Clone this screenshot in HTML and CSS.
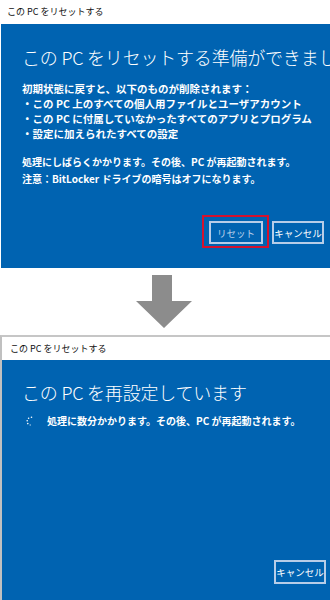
FILE: index.html
```html
<!DOCTYPE html>
<html lang="ja">
<head>
<meta charset="utf-8">
<title>この PC をリセットする</title>
<link rel="stylesheet" href="styles.css">
</head>
<body>
<div class="win win-first">
  <div class="titlebar">この PC をリセットする</div>
  <div class="panel panel-first">
    <h1 class="heading">この PC をリセットする準備ができました</h1>
    <div class="list">
      <p>初期状態に戻すと、以下のものが削除されます：</p>
      <p>・この PC 上のすべての個人用ファイルとユーザアカウント</p>
      <p>・この PC に付属していなかったすべてのアプリとプログラム</p>
      <p>・設定に加えられたすべての設定</p>
    </div>
    <div class="notes">
      <p>処理にしばらくかかります。その後、PC が再起動されます。</p>
      <p>注意：BitLocker ドライブの暗号はオフになります。</p>
    </div>
    <div class="buttons">
      <span class="highlight"><span class="btn btn-dim">リセット</span></span>
      <span class="btn btn-cancel1">キャンセル</span>
    </div>
  </div>
</div>

<div class="arrow-row">
  <svg class="arrow" width="56" height="53" viewBox="0 0 56 53">
    <polygon points="16,0 36,0 36,26 56,26 28,53 0,26 16,26" fill="#8c8c8c"/>
  </svg>
</div>

<div class="win win-second">
  <div class="titlebar titlebar-second">この PC をリセットする</div>
  <div class="panel panel-second">
    <h1 class="heading">この PC を再設定しています</h1>
    <div class="status">
      <svg class="spinner" width="9" height="10" viewBox="0 0 9 10">
        <circle cx="6.5" cy="1.2" r="0.8" fill="#fff"/>
        <circle cx="3.6" cy="2.2" r="0.8" fill="#fff"/>
        <circle cx="2.2" cy="4.8" r="0.8" fill="#fff"/>
        <circle cx="2.8" cy="7.6" r="0.8" fill="#fff"/>
        <circle cx="5.2" cy="9" r="0.7" fill="#fff" opacity="0.7"/>
      </svg>
      <span>処理に数分かかります。その後、PC が再起動されます。</span>
    </div>
    <div class="spacer"></div>
    <div class="buttons buttons-second">
      <span class="btn btn-cancel2">キャンセル</span>
    </div>
  </div>
</div>
</body>
</html>
```

FILE: styles.css
```css
html, body {
  margin: 0;
  padding: 0;
  background: #ffffff;
}
body {
  width: 330px;
  height: 600px;
  overflow: hidden;
  font-family: "Noto Sans CJK JP", "Noto Sans", sans-serif;
  color: #ffffff;
}
p { margin: 0; }

.win {
  display: flex;
  flex-direction: column;
}
.titlebar {
  height: 24px;
  line-height: 24px;
  padding-left: 7px;
  font-size: 9px;
  color: #111;
  background: #fff;
  white-space: nowrap;
}
.panel {
  background: #0063b1;
  padding-left: 22px;
  overflow: hidden;
  white-space: nowrap;
}
.panel-first {
  height: 244px;
  margin-left: 1px;
  padding-left: 21px;
  padding-top: 20px;
  box-sizing: border-box;
  display: flex;
  flex-direction: column;
}
.heading {
  margin: 0;
  font-size: 18px;
  font-weight: 300;
  line-height: 26px;
  letter-spacing: -0.2px;
}
.list {
  margin-top: 11px;
  font-size: 10.5px;
  font-weight: 700;
  line-height: 15px;
}
.notes {
  margin-top: 12px;
  font-size: 10px;
  font-weight: 700;
  line-height: 17px;
}
.buttons {
  display: flex;
  justify-content: flex-end;
  align-items: flex-start;
  gap: 3px;
  padding-right: 6px;
  margin-top: auto;
  margin-bottom: 20px;
}
.highlight {
  border: 2px solid #d4122e;
  padding: 4px 4px 2px 5px;
  display: flex;
}
.btn {
  box-sizing: border-box;
  height: 23px;
  border: 2px solid #b7cde8;
  display: flex;
  align-items: center;
  justify-content: center;
  font-size: 9.5px;
  font-weight: 400;
  color: #fff;
}
.btn-dim {
  width: 54px;
  color: #b9cfe9;
}
.btn-cancel1 {
  width: 52px;
  margin-top: 6px;
}

.arrow-row {
  height: 67px;
  display: flex;
  justify-content: center;
  align-items: flex-start;
}
.arrow {
  display: block;
  margin-top: 7px;
  margin-left: -2px;
}

.win-second {
  border-top: 2px solid #c6c6c6;
  border-left: 2px solid #c0c0c0;
  height: 265px;
}
.titlebar-second {
  height: 23px;
  line-height: 23px;
  padding-left: 8px;
}
.panel-second {
  flex: 1;
  padding-left: 20px;
  padding-top: 19px;
  display: flex;
  flex-direction: column;
}
.status {
  display: flex;
  align-items: center;
  margin-top: 8px;
  font-size: 10px;
  font-weight: 700;
  line-height: 16px;
}
.spinner {
  display: block;
  margin-left: 3px;
  margin-right: 13px;
}
.spacer { flex: 1; }
.buttons-second {
  margin-top: 0;
  margin-bottom: 18px;
  padding-right: 4px;
}
.btn-cancel2 {
  width: 52px;
  height: 24px;
}
```
